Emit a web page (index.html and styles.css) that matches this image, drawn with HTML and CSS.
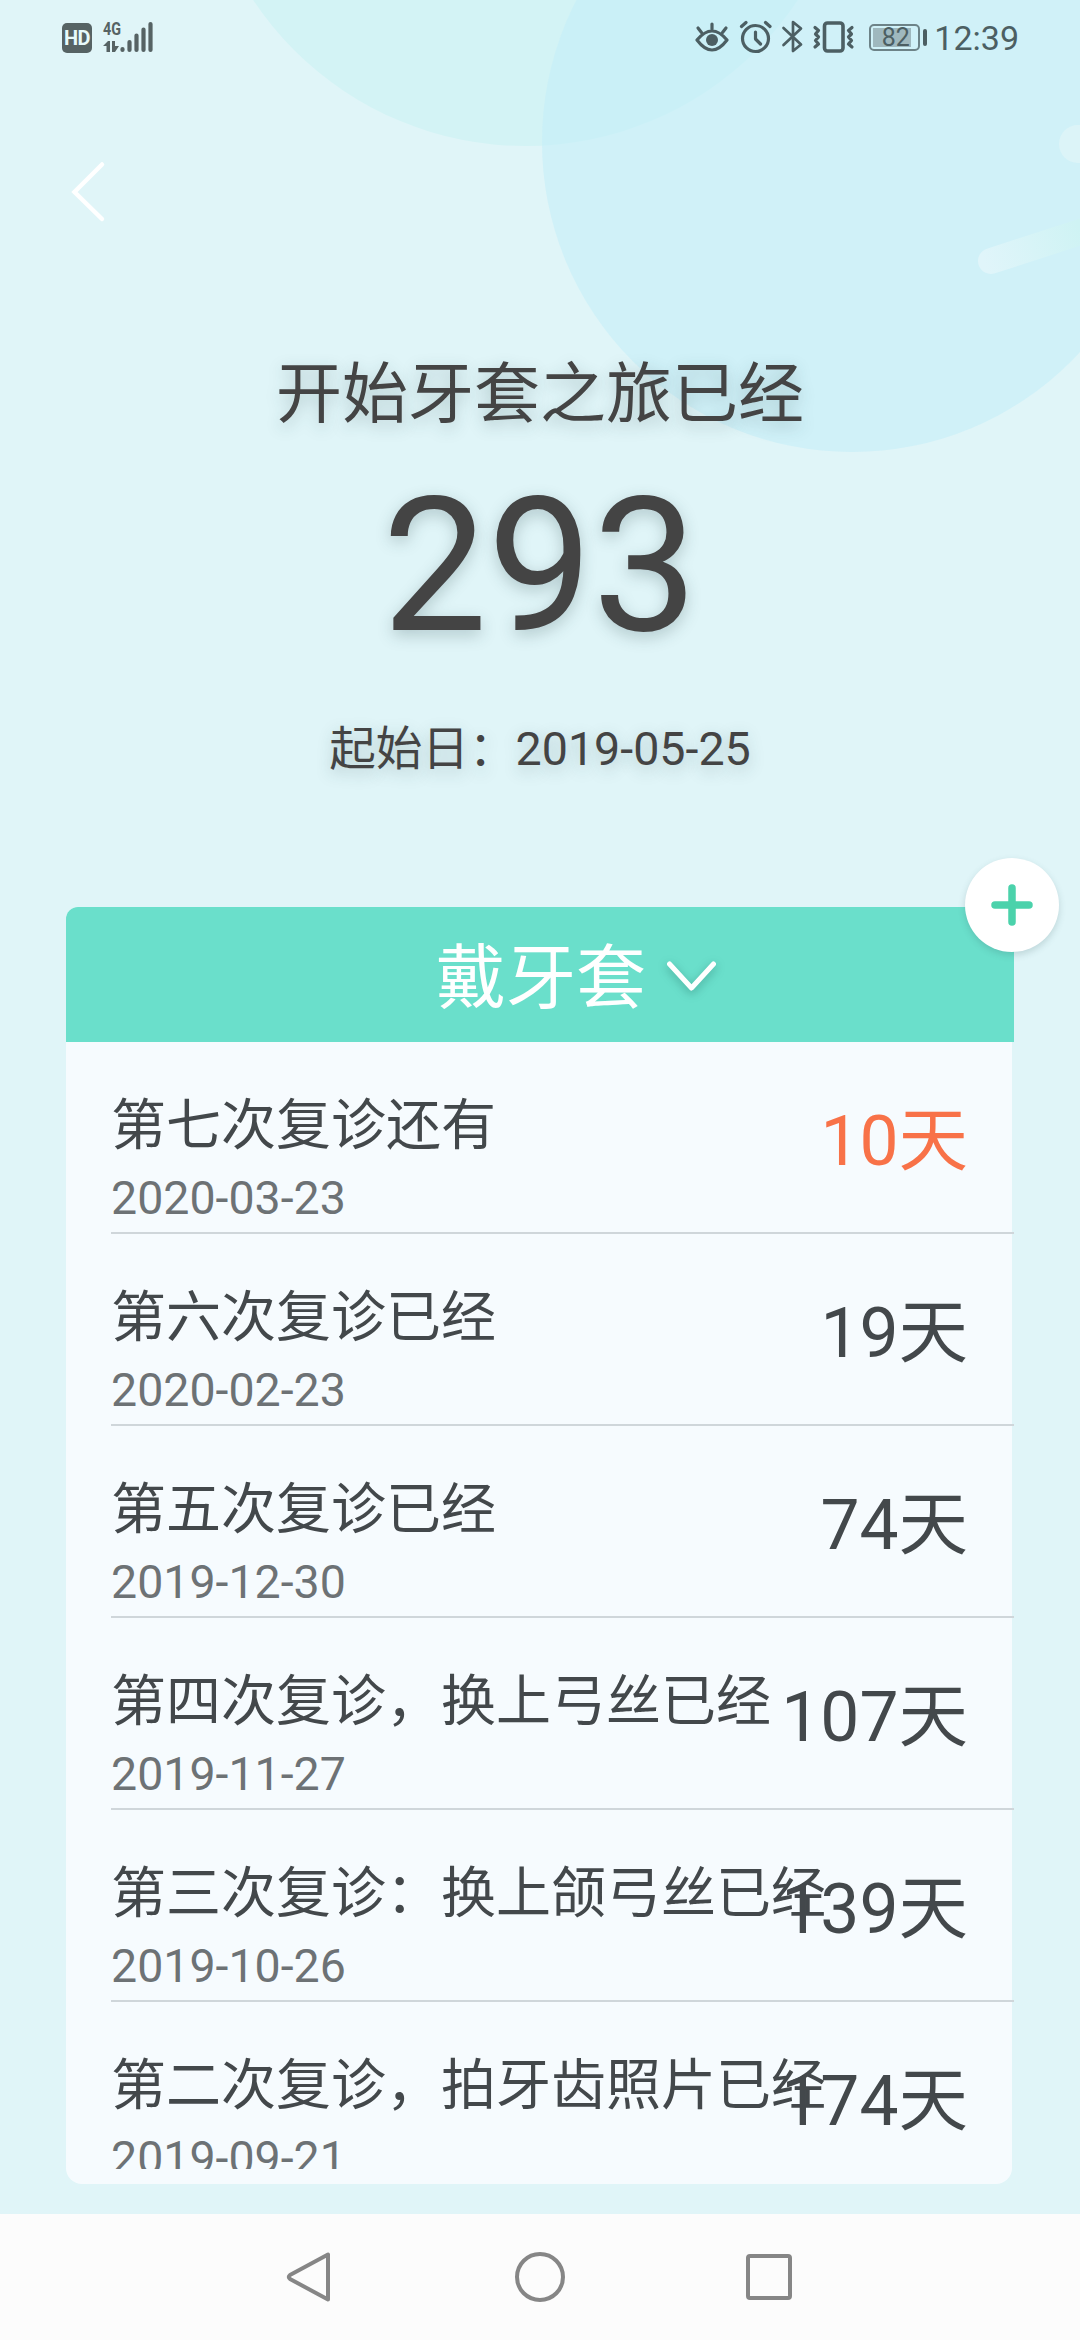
FILE: index.html
```html
<!DOCTYPE html>
<html lang="zh-CN">
<head>
<meta charset="utf-8">
<title>牙套之旅</title>
<link rel="stylesheet" href="styles.css">
</head>
<body>
<div class="screen">
  <svg class="backdrop" width="1080" height="480" viewBox="0 0 1080 480">
    <defs>
      <linearGradient id="streak" gradientUnits="userSpaceOnUse" x1="985" y1="265" x2="1080" y2="230">
        <stop offset="0" stop-color="#e0f5fa"/>
        <stop offset="1" stop-color="#cff3f4"/>
      </linearGradient>
    </defs>
    <circle cx="525.500" cy="-181" r="327" fill="#d3f3f5"/>
    <circle cx="852" cy="142" r="310" fill="#c5eef8" fill-opacity=".6"/>
    <circle cx="1078" cy="144" r="19" fill="#dcf4f8"/>
    <path d="M991 261L1096 227" stroke="url(#streak)" stroke-width="26" stroke-linecap="round"/>
  </svg>

  <header class="status">
    <div class="status-left">
      <span class="hd">HD</span>
      <svg class="signal" width="52" height="34" viewBox="0 0 52 34">
        <text x="0" y="15" class="net" textLength="18" lengthAdjust="spacingAndGlyphs">4G</text>
        <g stroke="#566364" stroke-width="4.200" stroke-linecap="round">
          <path d="M19.500 29V30M26.500 22V30M33.500 15.500V30M40.500 9.500V30M47.500 4V30"/>
        </g>
        <path d="M0 26L5 21H7V32H3.500V26ZM9 21H12V26H16L12 32H9Z" fill="#566364"/>
      </svg>
    </div>
    <div class="status-right">
      <svg width="174" height="36" viewBox="0 0 174 36" fill="none" stroke="#4c5f63" stroke-width="3.200" stroke-linecap="round" stroke-linejoin="round">
        <path d="M2 22Q17 4 32 22Q17 42 2 22Z"/>
        <circle cx="17" cy="22" r="6" fill="#4c5f63" stroke="none"/>
        <path d="M17 11V6M6.500 14.500L3 10M27.500 14.500L31 10"/>
        <circle cx="60.500" cy="20.500" r="13"/>
        <path d="M60.500 14V21L65.500 26M46.500 8.500L51 4.500M75 8.500L70.500 4.500"/>
        <path d="M88.500 10L106 26.500L98 33V4L106 10.500L88.500 27" stroke-width="2.700"/>
        <rect x="129.500" y="5" width="18.500" height="28" rx="3" stroke-width="3.600"/>
        <path d="M120 9.500L123.500 12.500L120.500 16L123.500 19L120.500 22.500L123.500 26L120 29M157 9.500L153.500 12.500L156.500 16L153.500 19L156.500 22.500L153.500 26L157 29"/>
      </svg>
      <div class="battery"><span>82</span></div>
      <span class="clock">12:39</span>
    </div>
  </header>

  <nav class="topbar">
    <svg width="40" height="64" viewBox="0 0 40 64" fill="none" stroke="#fff" stroke-width="4.500" stroke-linecap="round"><path d="M34 4.500L6.500 32L34 59"/></svg>
  </nav>

  <section class="hero">
    <h1 class="hero-title">开始牙套之旅已经</h1>
    <div class="hero-days">293</div>
    <p class="hero-start">起始日：2019-05-25</p>
  </section>

  <main class="card">
    <button class="fab" aria-label="添加">
      <svg width="44" height="44" viewBox="0 0 44 44" stroke="#4bd2ab" stroke-width="7.500" stroke-linecap="round"><path d="M22 5V39M5 22H39"/></svg>
    </button>
    <div class="card-head">
      <span class="card-title">戴牙套</span>
      <svg class="chevron" width="52" height="36" viewBox="0 0 52 36" fill="none" stroke="#fff" stroke-width="5" stroke-linecap="round" stroke-linejoin="round"><path d="M4.500 5L26.500 29L48.500 5"/></svg>
    </div>
    <ul class="list">
      <li class="row soon"><div class="info"><div class="name">第七次复诊还有</div><div class="date">2020-03-23</div></div><div class="days">10天</div></li>
      <li class="row"><div class="info"><div class="name">第六次复诊已经</div><div class="date">2020-02-23</div></div><div class="days">19天</div></li>
      <li class="row"><div class="info"><div class="name">第五次复诊已经</div><div class="date">2019-12-30</div></div><div class="days">74天</div></li>
      <li class="row"><div class="info"><div class="name">第四次复诊，换上弓丝已经</div><div class="date">2019-11-27</div></div><div class="days">107天</div></li>
      <li class="row"><div class="info"><div class="name">第三次复诊：换上颌弓丝已经</div><div class="date">2019-10-26</div></div><div class="days">139天</div></li>
      <li class="row"><div class="info"><div class="name">第二次复诊，拍牙齿照片已经</div><div class="date">2019-09-21</div></div><div class="days">174天</div></li>
    </ul>
  </main>

  <footer class="navbar">
    <svg width="52" height="52" viewBox="0 0 52 52"><path d="M43 3.500V48.500L5 28Q2.500 26 5 24Z"/></svg>
    <svg width="52" height="52" viewBox="0 0 52 52"><circle cx="26" cy="26" r="23"/></svg>
    <svg width="52" height="52" viewBox="0 0 52 52"><rect x="5" y="5" width="42" height="42" rx="2"/></svg>
  </footer>
</div>
</body>
</html>
```
FILE: styles.css
```css
* { box-sizing: border-box; }
body { margin: 0; font-family: Roboto, "Noto Sans CJK SC", sans-serif; color: #444; }
.screen { position: relative; width: 1080px; height: 2340px; overflow: hidden; background: #e0f5f8; display: flex; flex-direction: column; }
.backdrop { position: absolute; left: 0; top: 0; }

.status { position: relative; height: 76px; flex: none; display: flex; justify-content: space-between; padding: 0 61px 0 62px; color: #4c5f63; }
.status-left { display: flex; align-items: flex-start; gap: 11px; padding-top: 20px; }
.hd { margin-top: 3px; width: 30px; height: 30px; border-radius: 5px; background: #566364; color: #e8fafb; font: bold 20px/31px Roboto, sans-serif; text-align: center; letter-spacing: -.5px; }
.signal { overflow: visible; }
.net { font: bold 19px Roboto, sans-serif; fill: #566364; }
.status-right { display: flex; align-items: flex-start; padding-top: 18px; }
.battery { position: relative; width: 51px; height: 27px; margin: 6px 0 0; border: 2px solid #6d8388; border-radius: 5px; font-size: 25px; line-height: 24px; text-align: center; padding-left: 2px; background: linear-gradient(#9fb8be, #9fb8be) 2px 2px / 38px 19px no-repeat; }
.battery::after { content: ""; position: absolute; right: -9px; top: 3px; width: 4px; height: 17px; border-radius: 2px; background: #4c5f63; }
.clock { font-size: 34px; line-height: 41px; margin-left: 14px; }

.topbar { position: relative; height: 100px; flex: none; margin-top: 84px; padding-left: 68px; }
.topbar svg { display: block; }

.hero { position: relative; height: 647px; flex: none; text-align: center; text-shadow: 0 5px 16px rgba(40, 70, 75, .26); }
.hero-title { margin: 0; padding-top: 85px; font-size: 66px; line-height: 100px; font-weight: 400; }
.hero-days { margin-top: 22px; font-size: 187px; line-height: 200px; }
.hero-start { margin: 47px 0 0; font-size: 46.6px; line-height: 70px; }

.card { position: relative; flex: none; width: 948px; height: 1277px; margin-left: 66px; }
.card::before { content: ""; position: absolute; inset: 0 2px 0 0; border-radius: 12px 12px 16px 16px; background: #f6fbfe; }
.card-head { position: relative; height: 135px; border-radius: 12px 0 0 0; background: #6adfcb; color: #fff; font-size: 70px; line-height: 135px; display: flex; align-items: center; padding-left: 370px; gap: 19px; }
.card-title { padding-top: 10px; line-height: 125px; }
.chevron { margin-top: 4px; filter: drop-shadow(0 3px 5px rgba(20, 90, 80, .4)); }
.fab { position: absolute; z-index: 2; right: -45px; top: -49px; width: 94px; height: 94px; border: 0; border-radius: 50%; background: #fff; box-shadow: 0 3px 7px rgba(50, 90, 95, .2); display: grid; place-items: center; padding: 0; }
.list { position: relative; list-style: none; margin: 0; padding: 0 0 0 45px; height: 1127px; overflow: hidden; }
.row { display: flex; justify-content: space-between; height: 192px; border-bottom: 2px solid #cfd6da; padding-right: 46px; color: #43484b; white-space: nowrap; }
.info { width: 0; padding-top: 43px; }
.name { font-size: 55px; line-height: 80px; }
.date { font-size: 46.5px; line-height: 66px; color: #6d7275; }
.days { font-size: 69.5px; line-height: 100px; padding-top: 50px; }
.soon .days { color: #f87248; }

.navbar { margin-top: auto; height: 126px; background: #fcfcfc; display: flex; justify-content: center; align-items: center; gap: 177px; }
.navbar svg { fill: none; stroke: #868686; stroke-width: 4; stroke-linejoin: round; }
```
